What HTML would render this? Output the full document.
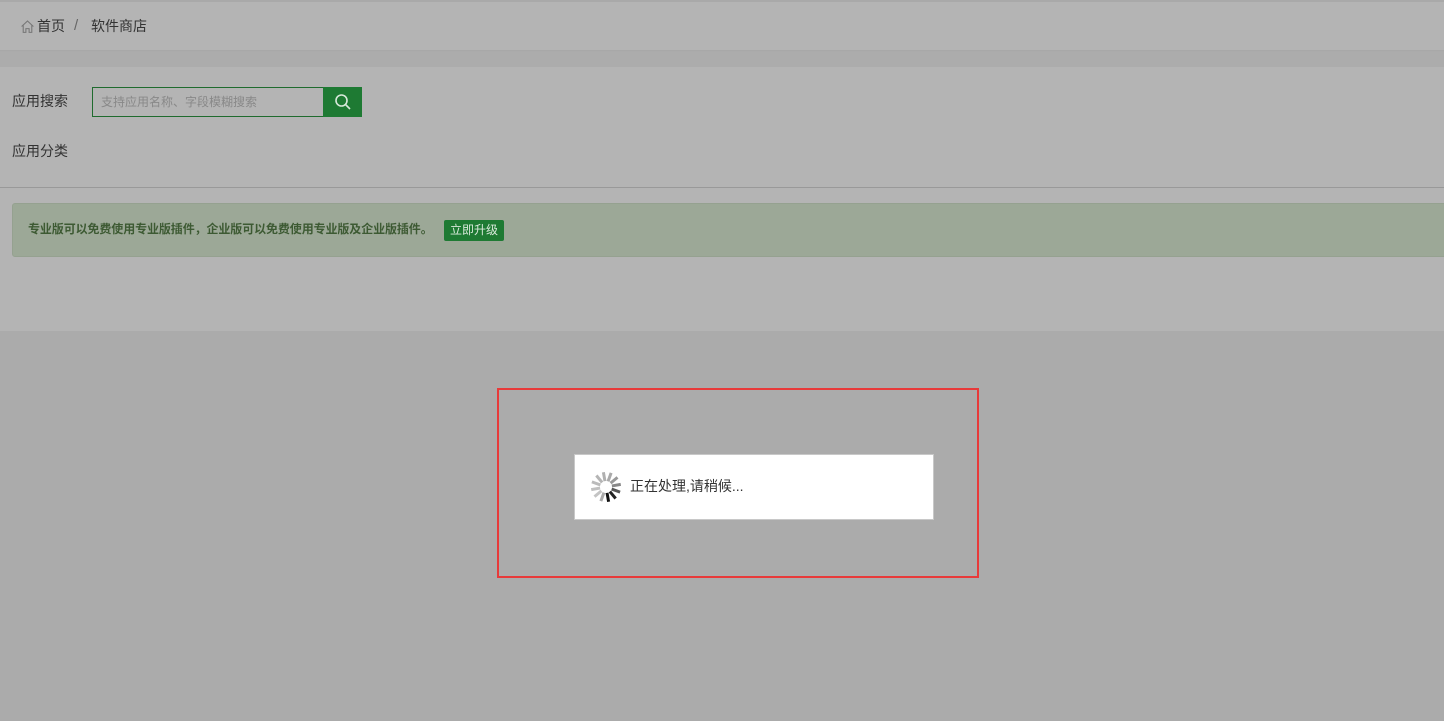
<!DOCTYPE html><html><head><meta charset="utf-8"><style>
*{margin:0;padding:0;box-sizing:border-box}
body{width:1444px;height:721px;overflow:hidden;background:#ababab;font-family:"Liberation Sans","Noto Sans CJK SC",sans-serif;position:relative}
.a{position:absolute;line-height:1.2}
</style></head><body>
<div class="a" style="left:0;top:0;width:1444px;height:2px;background:#a9a9a9"></div>
<div class="a" style="left:0;top:2px;width:1444px;height:49px;background:#b4b4b4;border-bottom:1px solid #a8a8a8"></div>
<div class="a" style="left:0;top:52px;width:1444px;height:15px;background:#acacac"></div>
<div class="a" style="left:0;top:67px;width:1444px;height:264px;background:#b4b4b4"></div>
<svg class="a" style="left:20px;top:19px" width="15" height="15" viewBox="0 0 14 14"><path d="M1.5 7L7 1.8 12.5 7M3 5.8V12.5H5.5V9H8.5V12.5H11V5.8" fill="none" stroke="#777" stroke-width="1"/></svg>
<div class="a" style="left:37px;top:18px;font-size:14px;color:#333">首页</div>
<div class="a" style="left:74px;top:17px;font-size:15px;color:#666">/</div>
<div class="a" style="left:91px;top:18px;font-size:14px;color:#333">软件商店</div>
<div class="a" style="left:12px;top:93px;font-size:14px;color:#333">应用搜索</div>
<div class="a" style="left:92px;top:87px;width:232px;height:30px;border:1px solid #1f6b2e;background:#b4b4b4;font-size:12px;color:#888;padding:7px 0 0 8px">支持应用名称、字段模糊搜索</div>
<div class="a" style="left:323px;top:87px;width:39px;height:30px;background:#1e7a33"></div>
<svg class="a" style="left:334px;top:93px" width="18" height="18" viewBox="0 0 18 18"><circle cx="7.5" cy="7.5" r="5.5" fill="none" stroke="#d8e8da" stroke-width="1.6"/><path d="M11.5 11.5L16 16" stroke="#d8e8da" stroke-width="1.6"/></svg>
<div class="a" style="left:12px;top:143px;font-size:14px;color:#333">应用分类</div>
<div class="a" style="left:0;top:187px;width:1444px;height:1px;background:#999"></div>
<div class="a" style="left:12px;top:203px;width:1440px;height:54px;background:#9ca897;border:1px solid #95a190;border-radius:3px"></div>
<div class="a" style="left:28px;top:222px;font-size:12px;font-weight:bold;color:#3d5a33;letter-spacing:-0.1px">专业版可以免费使用专业版插件，企业版可以免费使用专业版及企业版插件。</div>
<div class="a" style="left:444px;top:220px;width:60px;height:21px;background:#1e7a33;border-radius:2px;color:#d8e8da;font-size:12px;text-align:center;line-height:21px">立即升级</div>
<div class="a" style="left:497px;top:388px;width:482px;height:190px;border:2px solid #e83a3a"></div>
<div class="a" style="left:574px;top:454px;width:360px;height:66px;background:#fff;border:1px solid #c8c8c8"></div>
<svg class="a" style="left:589px;top:470px" width="34" height="34" viewBox="-17 -17 34 34">
<g stroke-width="3" stroke-linecap="butt">
<line x1="0" y1="6" x2="0" y2="15" stroke="#111" transform="rotate(-10)"/>
<line x1="0" y1="6" x2="0" y2="15" stroke="#222" transform="rotate(-40)"/>
<line x1="0" y1="6" x2="0" y2="15" stroke="#555" transform="rotate(-70)"/>
<line x1="0" y1="6" x2="0" y2="15" stroke="#888" transform="rotate(-100)"/>
<line x1="0" y1="6" x2="0" y2="15" stroke="#999" transform="rotate(-130)"/>
<line x1="0" y1="6" x2="0" y2="15" stroke="#aaa" transform="rotate(-160)"/>
<line x1="0" y1="6" x2="0" y2="15" stroke="#b0b0b0" transform="rotate(-190)"/>
<line x1="0" y1="6" x2="0" y2="15" stroke="#b5b5b5" transform="rotate(-220)"/>
<line x1="0" y1="6" x2="0" y2="15" stroke="#bbb" transform="rotate(-250)"/>
<line x1="0" y1="6" x2="0" y2="15" stroke="#c0c0c0" transform="rotate(-280)"/>
<line x1="0" y1="6" x2="0" y2="15" stroke="#c4c4c4" transform="rotate(-310)"/>
<line x1="0" y1="6" x2="0" y2="15" stroke="#aaa" transform="rotate(-340)"/>
</g></svg>
<div class="a" style="left:630px;top:478px;font-size:14px;color:#333">正在处理,请稍候...</div>
</body></html>
